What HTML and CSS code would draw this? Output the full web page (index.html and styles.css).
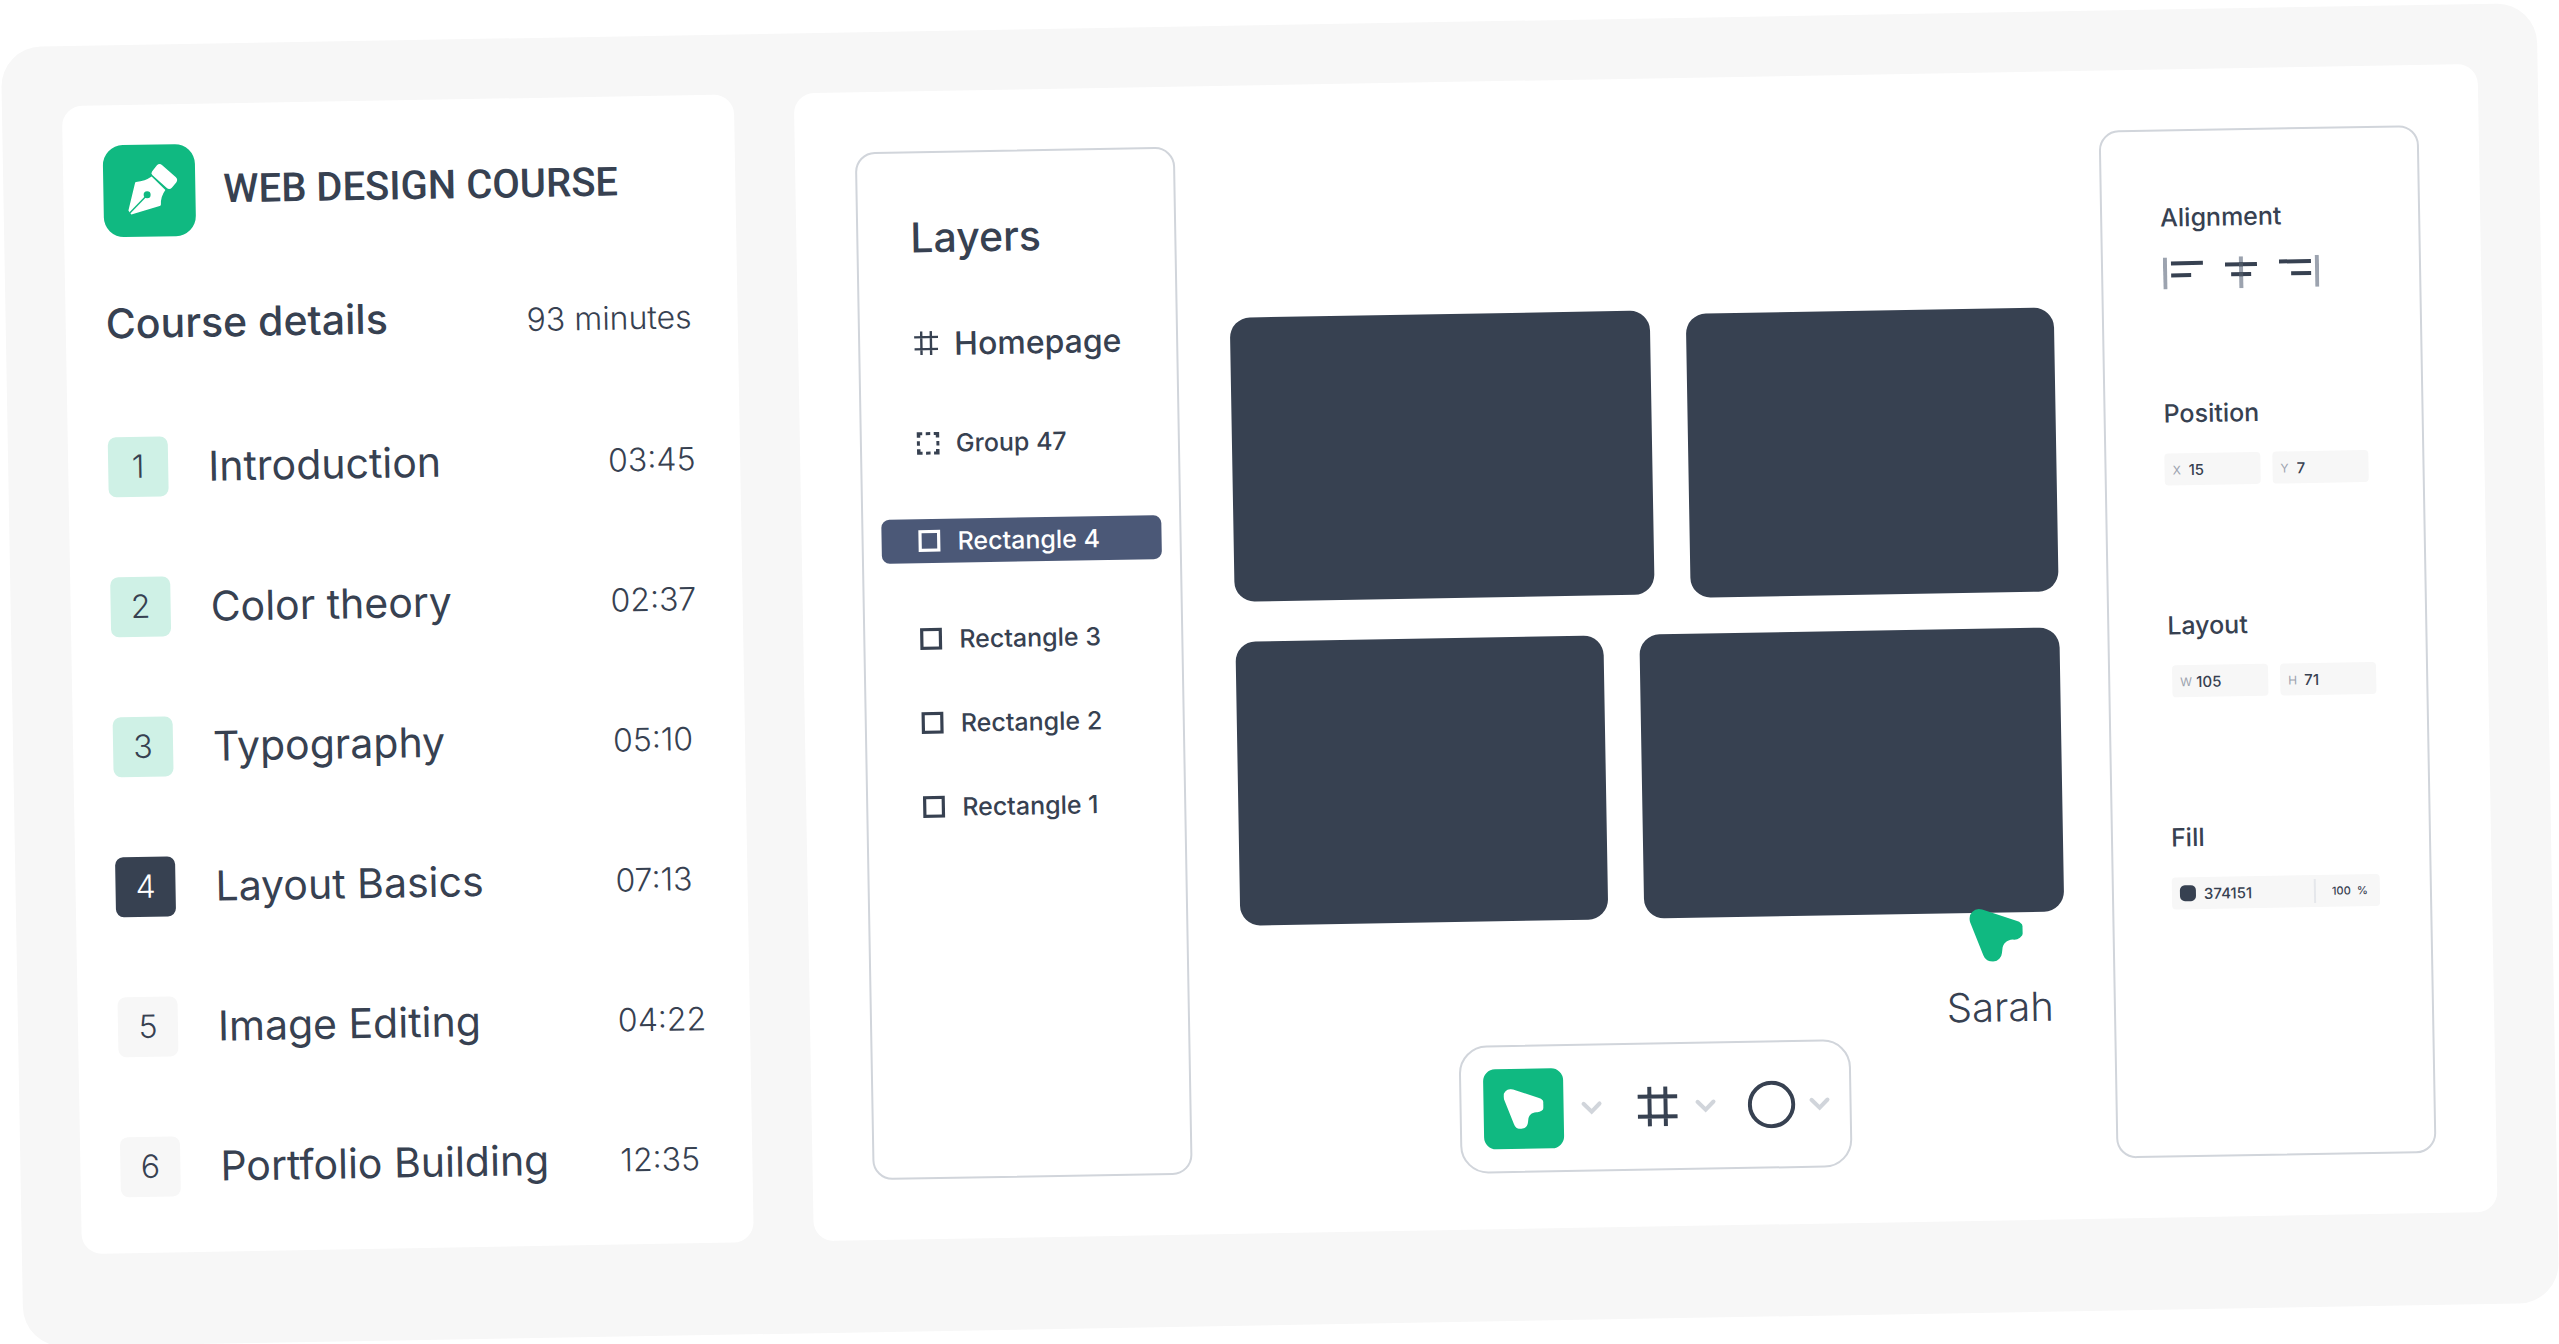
FILE: index.html
```html
<!DOCTYPE html>
<html lang="en">
<head>
<meta charset="utf-8">
<meta name="viewport" content="width=device-width, initial-scale=1">
<title>Web Design Course</title>
<link rel="stylesheet" href="styles.css">
</head>
<body>
<svg class="sprite" aria-hidden="true">
  <symbol id="hash" viewBox="0 0 40 40"><path d="M12 0V40M28 0V40M0 10H40M0 30H40" fill="none" stroke="currentColor" stroke-width="4"/></symbol>
  <symbol id="square" viewBox="0 0 24 24"><path d="M2.5 2.5h18.6v18.6H2.5z" fill="none" stroke="currentColor" stroke-width="3.2"/></symbol>
  <symbol id="pointer" viewBox="0 0 53 53"><path d="M.6 13A9.7 9.7 0 0 1 13 .7L46.2 12.2A9.6 9.6 0 0 1 43 31.3C37 31.6 33 35 32.4 41.5L32 44.500A9.6 9.6 0 0 1 13.300 46.500Z" fill="currentColor"/></symbol>
  <symbol id="chevron" viewBox="0 0 24 24"><path d="M4 8l8 8 8-8" fill="none" stroke="currentColor" stroke-width="4" stroke-linecap="round"/></symbol>
</svg>

<main class="board">
  <section class="course">
    <header class="course-header">
      <svg class="course-logo" viewBox="0 0 92 92" aria-hidden="true">
        <path d="M49 26.800L54 20.800Q56.500 18.300 59.300 20.800L72.500 32.800Q75.200 35.500 73 38.300L68.500 43.500Q66 46 63.200 43.500L49.400 30.600Q47.400 28.800 49 26.800Z" fill="#fff"/>
        <path d="M48.500 32Q42 36.500 32.800 37Q32 37 31.800 38L24.700 65.500L26 67.500L27.600 69.500L56 61.500Q57.300 61 57.300 60Q57 52 62 45.500Z" fill="#fff"/>
        <path d="M43 51L26 68" stroke="#10b981" stroke-width="1.500"/>
        <circle cx="43.700" cy="50" r="3.500" fill="#10b981"/>
      </svg>
      <h1 class="course-title">WEB DESIGN COURSE</h1>
    </header>
    <div class="course-summary">
      <h2 class="heading">Course details</h2>
      <span class="duration">93 minutes</span>
    </div>
    <ol class="lessons">
      <li class="lesson lesson--done"><span class="badge">1</span><span class="lesson-name">Introduction</span><time class="duration">03:45</time></li>
      <li class="lesson lesson--done"><span class="badge">2</span><span class="lesson-name">Color theory</span><time class="duration">02:37</time></li>
      <li class="lesson lesson--done"><span class="badge">3</span><span class="lesson-name">Typography</span><time class="duration">05:10</time></li>
      <li class="lesson lesson--current"><span class="badge">4</span><span class="lesson-name">Layout Basics</span><time class="duration">07:13</time></li>
      <li class="lesson"><span class="badge">5</span><span class="lesson-name">Image Editing</span><time class="duration">04:22</time></li>
      <li class="lesson"><span class="badge">6</span><span class="lesson-name">Portfolio Building</span><time class="duration">12:35</time></li>
    </ol>
  </section>

  <section class="editor">
    <aside class="panel layers">
      <h2 class="heading">Layers</h2>
      <div class="layer-list">
        <button type="button" class="layer layer--page"><svg class="layer-icon"><use href="#hash"/></svg>Homepage</button>
        <button type="button" class="layer layer--group"><svg class="layer-icon" viewBox="0 0 24 24"><path d="M1 1h5.500v3H4.500v2.500H1zM10 1h4.500v3H10zM18 1h5.500v5.500H20V4h-2zM1 10h3v4.500H1zM20.500 10h3v4.500h-3zM1 18h3.500v2.500h2v3H1zM10 20.500h4.500v3H10zM20 18h3.500v5.500H18v-3h2z" fill="currentColor"/></svg>Group 47</button>
        <button type="button" class="layer layer--group layer--selected"><svg class="layer-icon"><use href="#square"/></svg>Rectangle 4</button>
        <button type="button" class="layer"><svg class="layer-icon"><use href="#square"/></svg>Rectangle 3</button>
        <button type="button" class="layer"><svg class="layer-icon"><use href="#square"/></svg>Rectangle 2</button>
        <button type="button" class="layer"><svg class="layer-icon"><use href="#square"/></svg>Rectangle 1</button>
      </div>
    </aside>

    <div class="canvas">
      <div class="artboard">
        <div class="tile-row">
          <div class="tile tile--wide tile--raised"></div>
          <div class="tile"></div>
        </div>
        <div class="tile-row">
          <div class="tile"></div>
          <div class="tile tile--wide"></div>
        </div>
        <div class="collaborator">
          <svg class="collaborator-pointer"><use href="#pointer"/></svg>
          <span class="collaborator-name">Sarah</span>
        </div>
      </div>
      <div class="toolbar" role="toolbar" aria-label="Tools">
        <div class="tool tool--main">
          <button type="button" class="tool-button tool-button--active" aria-label="Move"><svg class="tool-icon"><use href="#pointer"/></svg></button>
          <button type="button" class="tool-more" aria-label="Move options"><svg class="chevron"><use href="#chevron"/></svg></button>
        </div>
        <div class="tool">
          <button type="button" class="tool-button" aria-label="Frame"><svg class="tool-icon"><use href="#hash"/></svg></button>
          <button type="button" class="tool-more" aria-label="Frame options"><svg class="chevron"><use href="#chevron"/></svg></button>
        </div>
        <div class="tool">
          <button type="button" class="tool-button" aria-label="Ellipse"><svg class="tool-ellipse" viewBox="0 0 48 48"><circle cx="24" cy="24" r="21.700" fill="none" stroke="currentColor" stroke-width="4"/></svg></button>
          <button type="button" class="tool-more" aria-label="Shape options"><svg class="chevron"><use href="#chevron"/></svg></button>
        </div>
      </div>
    </div>

    <aside class="panel inspector">
      <section class="property">
        <h3 class="property-title">Alignment</h3>
        <div class="align-buttons">
          <button type="button" class="align" aria-label="Align left"><svg width="40" height="32"><path d="M8 4h32v4H8zM8 16h20v4H8z" fill="#374151"/><path d="M0 0h4v32H0z" fill="#9ca3af"/></svg></button>
          <button type="button" class="align" aria-label="Align center"><svg width="32" height="32"><path d="M14 0h4v32h-4z" fill="#9ca3af"/><path d="M0 6h32v4H0zM6 16h20v4H6z" fill="#374151"/><path d="M14 6h4v4h-4zM14 16h4v4h-4z" fill="#4b5563"/></svg></button>
          <button type="button" class="align" aria-label="Align right"><svg width="40" height="32"><path d="M0 4h32v4H0zM12 16h20v4H12z" fill="#374151"/><path d="M36 0h4v32h-4z" fill="#9ca3af"/></svg></button>
        </div>
      </section>
      <section class="property property--fields">
        <h3 class="property-title">Position</h3>
        <div class="fields">
          <label class="field"><span class="field-label">X</span><input class="field-input" value="15"></label>
          <label class="field"><span class="field-label">Y</span><input class="field-input" value="7"></label>
        </div>
      </section>
      <section class="property property--fields">
        <h3 class="property-title">Layout</h3>
        <div class="fields fields--inset">
          <label class="field"><span class="field-label">W</span><input class="field-input" value="105"></label>
          <label class="field"><span class="field-label">H</span><input class="field-input" value="71"></label>
        </div>
      </section>
      <section class="property">
        <h3 class="property-title">Fill</h3>
        <div class="fill">
          <span class="swatch"></span>
          <input class="field-input" aria-label="Fill color" value="374151">
          <label class="opacity"><input class="opacity-input" aria-label="Fill opacity" value="100"><span>%</span></label>
        </div>
      </section>
    </aside>
  </section>
</main>
</body>
</html>
```
FILE: styles.css
```css
* {
  box-sizing: border-box;
}

body {
  margin: 0;
  padding: 25px 11px 19px 12px;
  overflow: hidden;
  background: #fff;
  color: #374151;
  font-family: Inter, "Liberation Sans", sans-serif;
}

h1, h2, h3, ol {
  margin: 0;
  padding: 0;
}

button, input {
  padding: 0;
  border: 0;
  background: none;
  color: inherit;
  font-family: inherit;
}

svg {
  display: block;
}

.sprite {
  position: absolute;
  width: 0;
  height: 0;
}

.board {
  display: flex;
  gap: 60px;
  padding: 60px 60px 92px;
  border-radius: 40px;
  background: #f7f7f7;
  transform: rotate(-1deg);
}

/* Course outline */

.course {
  flex: none;
  width: 672px;
  padding: 40px 40px 56px;
  border-radius: 20px;
  background: #fff;
}

.course-header {
  display: flex;
  align-items: center;
  gap: 28px;
}

.course-logo {
  width: 92px;
  height: 92px;
  border-radius: 20px;
  background: #10b981;
}

.course-title {
  font-family: Roboto, Inter, sans-serif;
  font-size: 40px;
  font-weight: 500;
  line-height: 48px;
  white-space: nowrap;
}

.course-summary {
  display: flex;
  align-items: baseline;
  justify-content: space-between;
  margin-top: 62px;
  padding-right: 6px;
}

.heading {
  font-size: 41px;
  font-weight: 500;
  line-height: 48px;
}

.duration {
  font-size: 32px;
  font-weight: 350;
}

.lessons {
  display: grid;
  gap: 80px;
  margin-top: 90px;
  list-style: none;
}

.lesson {
  display: grid;
  grid-template-columns: 60px 1fr 92px;
  column-gap: 40px;
  align-items: center;
}

.lesson .duration {
  padding-top: 4px;
  line-height: 48px;
}

.lesson-name {
  font-size: 41px;
  line-height: 48px;
  white-space: nowrap;
}

.badge {
  border-radius: 8px;
  background: #f7f7f7;
  font-size: 32px;
  font-weight: 350;
  line-height: 60px;
  text-align: center;
}

.lesson--done .badge {
  background: #cff1e6;
}

.lesson--current .badge {
  background: #374151;
  color: #fff;
}

/* Editor */

.editor {
  display: flex;
  flex: 1;
  padding: 60px 60px 56px;
  border-radius: 20px;
  background: #fff;
}

.panel {
  flex: none;
  width: 320px;
  margin-bottom: 4px;
  border: 2px solid #d1d5db;
  border-radius: 20px;
}

.layers {
  padding: 60px 18px;
}

.layers .heading {
  padding-left: 34px;
}

.layer-list {
  display: grid;
  gap: 40px;
  margin-top: 60px;
}

.layer {
  display: flex;
  align-items: center;
  gap: 16px;
  height: 44px;
  padding-left: 36px;
  border-radius: 8px;
  font-size: 25px;
  font-weight: 500;
}

.layer--page {
  margin-bottom: 16px;
  font-size: 32px;
}

.layer--group {
  margin-bottom: 14px;
}

.layer--selected {
  background: #4b5877;
  color: #fff;
}

.layer-icon {
  width: 24px;
  height: 24px;
}

.canvas {
  flex: 1;
  padding: 172px 48px 0 52px;
}

.artboard {
  position: relative;
  display: grid;
  gap: 36px;
}

.tile-row {
  display: flex;
  align-items: flex-end;
  gap: 36px;
}

.tile {
  flex: 368;
  height: 284px;
  border-radius: 20px;
  background: #374151;
}

.tile--wide {
  flex: 420;
}

.tile--raised {
  margin-bottom: 4px;
}

.collaborator {
  position: absolute;
  top: calc(100% - 4px);
  right: 12px;
}

.collaborator-pointer {
  width: 53px;
  height: 53px;
  margin: 0 0 22px 24px;
  color: #10b981;
}

.collaborator-name {
  display: block;
  font-size: 40px;
  font-weight: 350;
  line-height: 48px;
}

.toolbar {
  display: flex;
  justify-content: space-between;
  width: 392px;
  margin: 124px auto 0;
  padding: 22px 18px 22px 22px;
  border: 2px solid #d1d5db;
  border-radius: 28px;
}

.tool {
  display: flex;
  align-items: center;
  gap: 12px;
}

.tool--main {
  gap: 16px;
}

.tool-button {
  display: grid;
  place-items: center;
  width: 48px;
  height: 80px;
  border-radius: 12px;
}

.tool-button--active {
  width: 80px;
  background: #10b981;
  color: #fff;
}

.tool-icon {
  width: 40px;
  height: 40px;
}

.tool-ellipse {
  width: 48px;
  height: 48px;
}

.chevron {
  width: 24px;
  height: 24px;
  color: #d1d5db;
}

/* Inspector */

.inspector {
  display: flex;
  flex-direction: column;
  gap: 108px;
  padding: 70px 40px 0 58px;
}

.property--fields {
  padding-bottom: 16px;
}

.property-title {
  margin-bottom: 24px;
  font-size: 25px;
  font-weight: 500;
  line-height: 32px;
}

.align-buttons {
  display: flex;
  gap: 22px;
  padding-left: 2px;
}

.fields {
  display: flex;
  gap: 12px;
}

.fields--inset {
  padding-left: 4px;
}

.field {
  display: flex;
  align-items: center;
  width: 96px;
  height: 32px;
  padding: 0 8px;
  border-radius: 4px;
  background: #f7f7f7;
}

.field-label {
  flex: none;
  width: 16px;
  color: #9ca3af;
  font-size: 12px;
}

.field-input {
  flex: 1;
  min-width: 0;
  height: 32px;
  font-size: 15px;
  font-weight: 500;
}

.fill {
  display: flex;
  align-items: center;
  gap: 8px;
  width: 208px;
  height: 32px;
  padding: 0 12px 0 8px;
  border-radius: 4px;
  background: #f7f7f7;
}

.swatch {
  width: 16px;
  height: 16px;
  border-radius: 5px;
  background: #374151;
}

.opacity {
  display: flex;
  align-items: center;
  justify-content: space-between;
  width: 54px;
  height: 24px;
  padding-left: 16px;
  border-left: 2px solid #e5e7eb;
  font-size: 11px;
  font-weight: 500;
}

.opacity-input {
  width: 24px;
  font-size: 11px;
  font-weight: 500;
}
```
